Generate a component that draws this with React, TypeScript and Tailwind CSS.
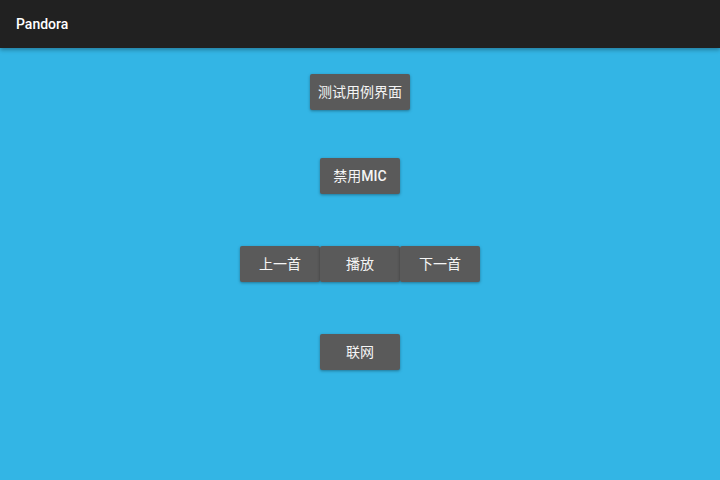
const btn =
  'h-9 min-w-[80px] px-2 rounded-[2px] bg-[#5a5a5a] text-[#f5f5f5] text-sm shadow-[0_1px_3px_rgba(0,0,0,0.35)] flex items-center justify-center';

export default function App() {
  return (
    <div
      className="w-[720px] h-[480px] flex flex-col bg-[#33b5e5] overflow-hidden"
      style={{ fontFamily: 'Roboto, "Noto Sans CJK SC", sans-serif' }}
    >
      <header className="h-12 shrink-0 bg-[#212121] flex items-center px-4 shadow-[0_2px_4px_rgba(0,0,0,0.3)]">
        <span className="text-white text-sm font-medium">Pandora</span>
      </header>

      <main className="flex flex-col items-center">
        <button className={`${btn} mt-[26px]`}>测试用例界面</button>
        <button className={`${btn} mt-[48px]`}>
          禁用<span className="font-medium">MIC</span>
        </button>
        <div className="flex mt-[52px]">
          <button className={btn}>上一首</button>
          <button className={btn}>播放</button>
          <button className={btn}>下一首</button>
        </div>
        <button className={`${btn} mt-[52px]`}>联网</button>
      </main>
    </div>
  );
}
